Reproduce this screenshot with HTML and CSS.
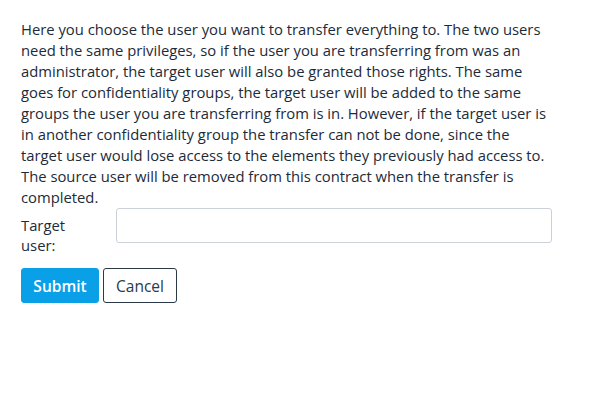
FILE: index.html
```html
<!DOCTYPE html>
<html>
<head>
<meta charset="utf-8">
<link rel="stylesheet" href="styles.css">
</head>
<body>
<div class="panel">
  <p class="intro">Here you choose the user you want to transfer everything to. The two users need the same privileges, so if the user you are transferring from was an administrator, the target user will also be granted those rights. The same goes for confidentiality groups, the target user will be added to the same groups the user you are transferring from is in. However, if the target user is in another confidentiality group the transfer can not be done, since the target user would lose access to the elements they previously had access to. The source user will be removed from this contract when the transfer is completed.</p>
  <div class="field">
    <label class="label" for="target">Target user:</label>
    <input class="input" id="target" type="text">
  </div>
  <div class="actions">
    <button class="btn btn-primary">Submit</button>
    <button class="btn btn-outline">Cancel</button>
  </div>
</div>
</body>
</html>
```
FILE: styles.css
```css
html, body {
  margin: 0;
  padding: 0;
  background: #fff;
}
body {
  font-family: "Open Sans", "Liberation Sans", sans-serif;
  color: #1c2b39;
  font-size: 14.8px;
  line-height: 21px;
}
.panel {
  width: 531px;
  padding: 19px 21px;
}
.intro {
  margin: 0;
}
.field {
  display: flex;
  align-items: flex-start;
  margin-top: 0;
}
.label {
  width: 80px;
  margin-right: 15px;
  padding-top: 7px;
  line-height: 20px;
}
.input {
  flex: 1;
  height: 35px;
  box-sizing: border-box;
  border: 1px solid #ccd1d9;
  border-radius: 3px;
  margin: 0;
  font: inherit;
}
.actions {
  display: flex;
  gap: 4px;
  margin-top: 13px;
}
.btn {
  height: 35px;
  box-sizing: border-box;
  border-radius: 3px;
  font-family: inherit;
  font-size: 15.5px;
  padding: 0;
  cursor: pointer;
}
.btn-primary {
  width: 78px;
  background: #0aa0e8;
  border: 1px solid #0aa0e8;
  color: #fff;
  font-weight: 600;
}
.btn-outline {
  width: 74px;
  background: #fff;
  border: 1px solid #2b3a48;
  color: #2b3a48;
}
```
